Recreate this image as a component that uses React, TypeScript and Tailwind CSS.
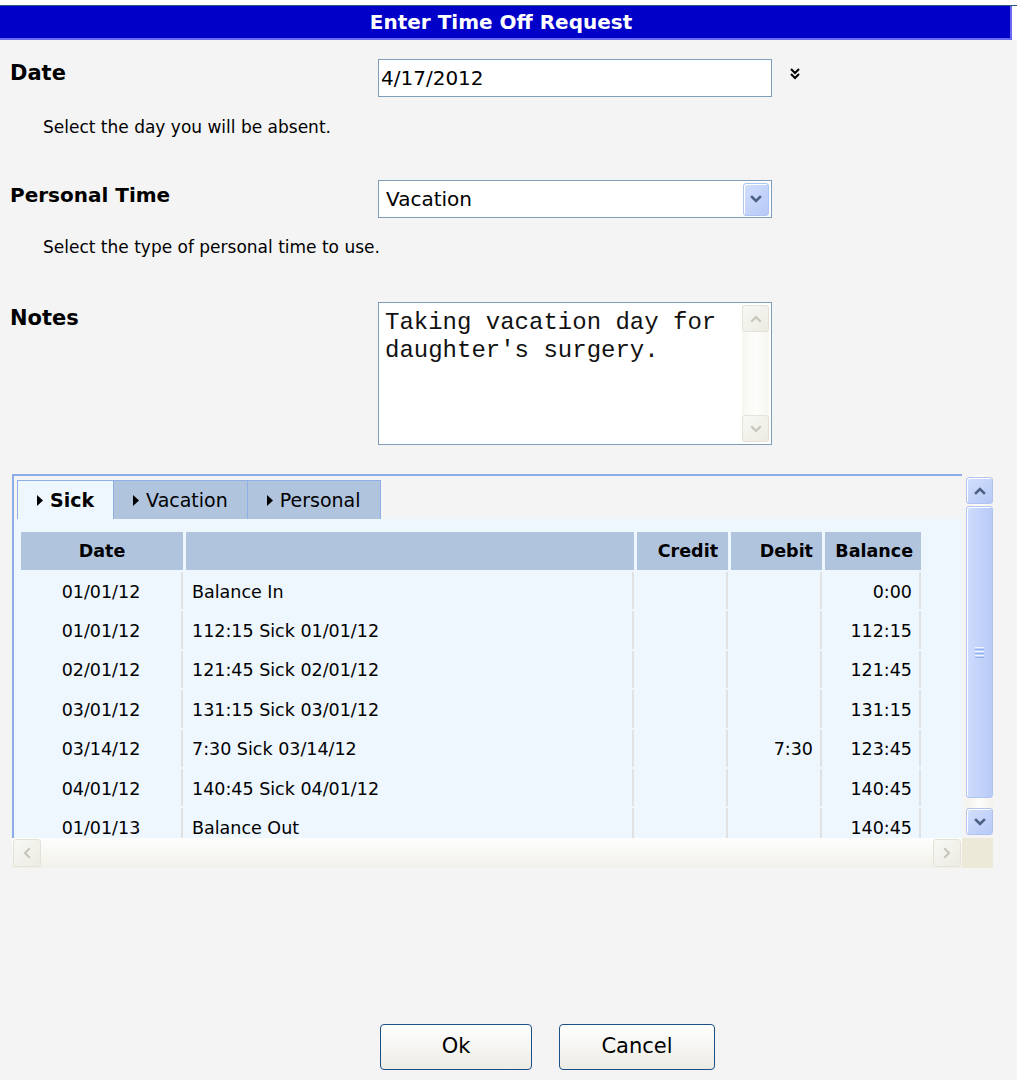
import React from "react";

type Dir = "up" | "down" | "left" | "right";

function Chevron({ dir, color, size = 12, stroke = 2.4 }: { dir: Dir; color: string; size?: number; stroke?: number }) {
  const paths: Record<Dir, string> = {
    up: "M2 8 L6 4 L10 8",
    down: "M2 4 L6 8 L10 4",
    left: "M8 2 L4 6 L8 10",
    right: "M4 2 L8 6 L4 10",
  };
  return (
    <svg width={size} height={size} viewBox="0 0 12 12" fill="none">
      <path d={paths[dir]} stroke={color} strokeWidth={stroke} strokeLinecap="square" strokeLinejoin="miter" />
    </svg>
  );
}

function BlueButton({ dir, className = "" }: { dir: Dir; className?: string }) {
  return (
    <div
      className={`flex items-center justify-center rounded-[3px] border border-[#b0c4f2] bg-gradient-to-br from-[#d3e0fd] to-[#b6c9f6] shadow-[inset_1px_1px_0_#ffffff] ${className}`}
    >
      <Chevron dir={dir} color="#4d6185" size={12} stroke={2.6} />
    </div>
  );
}

function GrayButton({ dir, className = "" }: { dir: Dir; className?: string }) {
  return (
    <div
      className={`flex items-center justify-center rounded-[3px] border border-[#e4e2d8] bg-gradient-to-br from-[#f8f8f4] to-[#ecebe3] ${className}`}
    >
      <Chevron dir={dir} color="#c8c6bb" size={12} stroke={2.2} />
    </div>
  );
}

const rows = [
  { date: "01/01/12", desc: "Balance In", credit: "", debit: "", bal: "0:00" },
  { date: "01/01/12", desc: "112:15 Sick 01/01/12", credit: "", debit: "", bal: "112:15" },
  { date: "02/01/12", desc: "121:45 Sick 02/01/12", credit: "", debit: "", bal: "121:45" },
  { date: "03/01/12", desc: "131:15 Sick 03/01/12", credit: "", debit: "", bal: "131:15" },
  { date: "03/14/12", desc: "7:30 Sick 03/14/12", credit: "", debit: "7:30", bal: "123:45" },
  { date: "04/01/12", desc: "140:45 Sick 04/01/12", credit: "", debit: "", bal: "140:45" },
  { date: "01/01/13", desc: "Balance Out", credit: "", debit: "", bal: "140:45" },
];

function Tab({ label, active }: { label: string; active?: boolean }) {
  return (
    <div
      className={`flex h-[39px] items-center gap-[7px] border-l border-t border-[#8fb0e6] pl-[19px] pr-[19px] text-[19px] ${
        active ? "bg-[#eef6fe] font-bold" : "bg-[#b0c4de]"
      }`}
    >
      <svg width="6" height="11" viewBox="0 0 6 11">
        <path d="M0 0 L6 5.5 L0 11 Z" fill="#000" />
      </svg>
      <span className="leading-none">{label}</span>
    </div>
  );
}

export default function App() {
  return (
    <div className="h-[1080px] w-[1017px] overflow-hidden bg-[#f4f4f4] font-['DejaVu_Sans',sans-serif] text-black">
      {/* title bar */}
      <div className="h-[5px] bg-white" />
      <div className="flex border-t border-[#2c5d87] bg-white">
        <div className="flex h-[34px] w-[1012px] items-center justify-center border-b-2 border-r-2 border-[#6a6aee] bg-[#0000c8] pr-[8px]">
          <span className="text-[20px] font-bold leading-none text-white">Enter Time Off Request</span>
        </div>
      </div>

      {/* form */}
      <div className="pt-[19px]">
        <div className="flex">
          <div className="w-[378px] pl-[10px] pt-[2px] text-[21px] font-bold leading-[24px]">Date</div>
          <div className="flex h-[38px] w-[394px] items-center border border-[#7f9db9] bg-white pl-[2px] text-[20px]">
            4/17/2012
          </div>
          <svg className="ml-[17px] mt-[8px]" width="12" height="14" viewBox="0 0 12 14" fill="none">
            <path d="M2 2 L6 6 L10 2" stroke="#000" strokeWidth="2" />
            <path d="M2 7 L6 11 L10 7" stroke="#000" strokeWidth="2" />
          </svg>
        </div>
        <div className="mt-[20px] pl-[43px] text-[17px] leading-[20px]">Select the day you will be absent.</div>

        <div className="mt-[43px] flex">
          <div className="w-[378px] pl-[10px] pt-[3px] text-[20px] font-bold leading-[24px]">Personal Time</div>
          <div className="flex h-[38px] w-[394px] items-center justify-between border border-[#7f9db9] bg-white pl-[7px] pr-[2px] text-[20px]">
            <span>Vacation</span>
            <BlueButton dir="down" className="h-[33px] w-[26px]" />
          </div>
        </div>
        <div className="mt-[19px] pl-[43px] text-[17px] leading-[20px]">Select the type of personal time to use.</div>

        <div className="mt-[45px] flex">
          <div className="w-[378px] pl-[10px] pt-[4px] text-[21px] font-bold leading-[24px]">Notes</div>
          <div className="flex h-[143px] w-[394px] border border-[#7f9db9] bg-white">
            <div className="flex-1 pl-[6px] pt-[6px] font-['Liberation_Mono',monospace] text-[24px] leading-[28px] text-[#111]">
              Taking vacation day for
              <br />
              daughter's surgery.
            </div>
            <div className="m-[2px] flex w-[27px] flex-col justify-between bg-gradient-to-r from-[#f6f6f1] via-[#fdfdfb] to-[#f6f6f1]">
              <GrayButton dir="up" className="h-[27px] w-[27px]" />
              <GrayButton dir="down" className="h-[27px] w-[27px]" />
            </div>
          </div>
        </div>
      </div>

      {/* ledger grid */}
      <div className="ml-[12px] mt-[29px] flex items-start">
        <div className="flex h-[364px] w-[950px] flex-col overflow-hidden border-l-2 border-t-2 border-[#8cadea]">
          <div className="flex h-[43px] bg-[#f4f4f4] pl-[3px] pt-[4px]">
            <Tab label="Sick" active />
            <Tab label="Vacation" />
            <div className="border-r border-[#8fb0e6]">
              <Tab label="Personal" />
            </div>
          </div>
          <div className="flex-1 overflow-hidden bg-[#eef6fe] pl-[4px] pt-[11px]">
            <table className="border-separate border-spacing-x-[3px] border-spacing-y-[2px] text-[17.5px]">
              <thead>
                <tr className="h-[38px] bg-[#b0c4de] font-bold">
                  <th className="w-[162px] bg-[#b0c4de] text-center">Date</th>
                  <th className="w-[448px] bg-[#b0c4de]"></th>
                  <th className="w-[91px] bg-[#b0c4de] pr-[10px] text-right">Credit</th>
                  <th className="w-[91px] bg-[#b0c4de] pr-[9px] text-right">Debit</th>
                  <th className="w-[96px] bg-[#b0c4de] pr-[8px] text-right">Balance</th>
                </tr>
              </thead>
              <tbody>
                {rows.map((r, i) => (
                  <tr key={i} className="h-[37.4px]">
                    <td className="border-r-2 border-[#dfe1e3] pt-[2px] text-center">{r.date}</td>
                    <td className="border-r-2 border-[#dfe1e3] pl-[6px] pt-[2px]">{r.desc}</td>
                    <td className="border-r-2 border-[#dfe1e3] pr-[10px] pt-[2px] text-right">{r.credit}</td>
                    <td className="border-r-2 border-[#dfe1e3] pr-[7px] pt-[2px] text-right">{r.debit}</td>
                    <td className="border-r-2 border-[#dfe1e3] pr-[7px] pt-[2px] text-right">{r.bal}</td>
                  </tr>
                ))}
              </tbody>
            </table>
          </div>
        </div>

        {/* vertical scrollbar */}
        <div className="ml-[4px] mt-[1px] flex h-[360px] w-[27px] flex-col bg-gradient-to-r from-[#f3f1ea] via-[#fdfdfb] to-[#f3f1ea]">
          <BlueButton dir="up" className="mt-[2px] h-[27px] w-[27px]" />
          <div className="mt-[2px] flex h-[292px] w-[27px] items-center justify-center rounded-[3px] border border-[#b0c4f2] bg-gradient-to-r from-[#cddbfd] to-[#b9cbf6] shadow-[inset_1px_1px_0_#ffffff]">
            <div className="flex flex-col gap-[1px]">
              <div className="h-[1px] w-[9px] bg-[#eef4fe]" />
              <div className="h-[1px] w-[9px] bg-[#8eb0f2]" />
              <div className="h-[1px] w-[9px] bg-[#eef4fe]" />
              <div className="h-[1px] w-[9px] bg-[#8eb0f2]" />
              <div className="h-[1px] w-[9px] bg-[#eef4fe]" />
              <div className="h-[1px] w-[9px] bg-[#8eb0f2]" />
            </div>
          </div>
          <div className="flex-1" />
          <BlueButton dir="down" className="h-[27px] w-[27px]" />
        </div>
      </div>

      {/* horizontal scrollbar */}
      <div className="ml-[12px] flex h-[30px]">
        <div className="flex w-[950px] items-center justify-between bg-gradient-to-b from-[#fefefd] to-[#f1f0e9] px-[1px]">
          <GrayButton dir="left" className="h-[28px] w-[28px]" />
          <GrayButton dir="right" className="h-[28px] w-[28px]" />
        </div>
        <div className="w-[31px] bg-[#ece9d8]" />
      </div>

      {/* actions */}
      <div className="mt-[156px] flex justify-center gap-[27px] pl-[78px]">
        <button className="h-[46px] w-[152px] rounded-[4px] border border-[#1c4f85] bg-gradient-to-b from-[#ffffff] to-[#ecebe4] text-[21px]">
          Ok
        </button>
        <button className="h-[46px] w-[156px] rounded-[4px] border border-[#1c4f85] bg-gradient-to-b from-[#ffffff] to-[#ecebe4] text-[21px]">
          Cancel
        </button>
      </div>
    </div>
  );
}
